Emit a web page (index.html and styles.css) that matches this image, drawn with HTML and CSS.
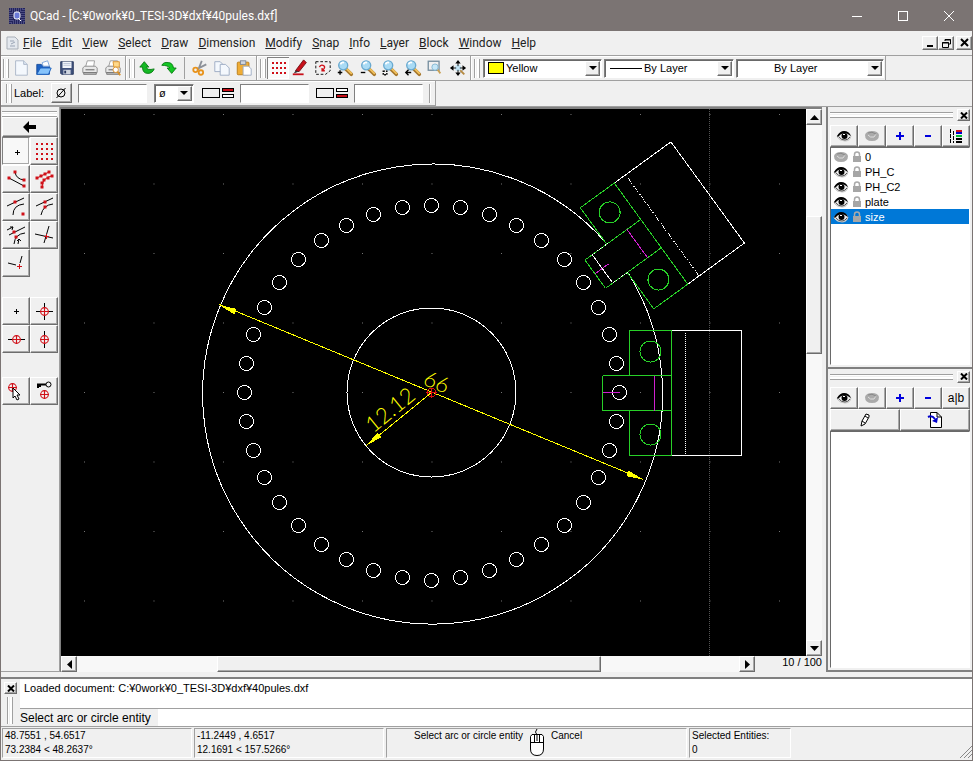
FILE: index.html
```html
<!DOCTYPE html>
<html lang="en">
<head>
    <meta charset="UTF-8">
    <meta name="viewport" content="width=device-width, initial-scale=1.0">
    <title>QCad</title>
    <link rel="stylesheet" href="styles.css">
</head>
<body>
    <!-- shared icons -->
    <svg class="defs" width="0" height="0">
        <symbol id="eye" viewBox="0 0 16 12">
            <path d="M1 7Q3 2 8 2T15 6Q14 11 9 11T1 7Z" fill="#e4e4e4" stroke="#c4c4c4"/>
            <path d="M4 6Q8 3 13 6Q11 9 8 9Q5 9 4 6Z" fill="#fff"/>
            <path d="M1 6Q4 1 8 1Q13 1 15 6Q11 3 8 3Q4 4 2 7Z" fill="#000"/>
            <circle cx="8.500" cy="6" r="3" fill="#000"/>
            <path d="M3 7Q5 10 9 10Q12 10 14 7" fill="none" stroke="#555"/>
            <rect x="7" y="4" width="2" height="1" fill="#fff"/>
        </symbol>
        <symbol id="eye-off" viewBox="0 0 16 12">
            <path d="M1 5Q2 1 8 1T15 5Q15 11 8 11T1 5Z" fill="#aaa"/>
            <path d="M4 5Q6 8 10 7L12 4" fill="none" stroke="#ddd"/>
            <path d="M4 3Q8 1 12 4" fill="none" stroke="#888"/>
        </symbol>
        <symbol id="lock" viewBox="0 0 10 12">
            <path d="M2.500 6V3.500Q2.500 1 5 1T7.500 3.500V6" fill="none" stroke="#aaa" stroke-width="1.5"/>
            <rect x="1" y="5" width="8" height="6" fill="#a6a6a6"/>
        </symbol>
        <symbol id="glass" viewBox="0 0 20 20">
            <path d="M11 11L17 17" stroke="#a5762b" stroke-width="4" stroke-linecap="round"/>
            <path d="M12 11L17 16" stroke="#f3c25c" stroke-width="2" stroke-linecap="round"/>
            <circle cx="8" cy="7" r="5" fill="#a9dbf5" stroke="#69a9cf" stroke-width="1.5"/>
            <path d="M5 6Q6 3 9 4" fill="none" stroke="#fff" stroke-width="2"/>
        </symbol>
        <symbol id="target" viewBox="0 0 10 10">
            <circle cx="5" cy="5" r="3.500" fill="none" stroke="#d01018"/>
            <path d="M5 1V9M1 5H9" stroke="#d01018"/>
        </symbol>
        <symbol id="printer" viewBox="0 0 20 20">
            <path d="M5 9L7 2H15L14 9Z" fill="#fff" stroke="#999"/>
            <path d="M2 10L4 8H16L18 10V15H2Z" fill="#e8e8e8" stroke="#888"/>
            <path d="M3 15H17V17H3Z" fill="#bbb" stroke="#777"/>
            <path d="M5 12H15" stroke="#555"/>
        </symbol>
    </svg>

    <div class="window">
        <header class="titlebar">
            <svg class="logo" width="16" height="16" viewBox="0 0 16 16">
                <rect width="16" height="16" fill="#22235c"/>
                <path d="M1 1H15V15H1ZM3 3H13V13H3Z" fill="none" stroke="#7779a8" stroke-dasharray="1 1"/>
                <rect x="5" y="4" width="6" height="7" rx="2" fill="#6b7ad8" stroke="#fff"/>
                <path d="M9 10L12 13" stroke="#fff"/>
            </svg>
            <h1>QCad - [C:¥0work¥0_TESI-3D¥dxf¥40pules.dxf]</h1>
            <button class="win-btn" aria-label="Minimize"><svg width="12" height="12"><path d="M1 6.500H11" stroke="#fff"/></svg></button>
            <button class="win-btn" aria-label="Maximize"><svg width="12" height="12"><rect x="1.500" y="1.500" width="9" height="9" fill="none" stroke="#fff"/></svg></button>
            <button class="win-btn" aria-label="Close"><svg width="12" height="12"><path d="M1 1L11 11M11 1L1 11" stroke="#fff"/></svg></button>
        </header>

        <nav class="menubar">
            <svg class="doc-icon" width="13" height="14" viewBox="0 0 13 14">
                <path d="M1 1H9L12 4V13H1Z" fill="#e4e8ee" stroke="#a9afb8"/>
                <path d="M4 5H8M5 8L9 6M4 10H9" stroke="#9aa4b5"/>
            </svg>
            <a href="#"><u>F</u>ile</a>
            <a href="#"><u>E</u>dit</a>
            <a href="#"><u>V</u>iew</a>
            <a href="#"><u>S</u>elect</a>
            <a href="#"><u>D</u>raw</a>
            <a href="#"><u>D</u>imension</a>
            <a href="#"><u>M</u>odify</a>
            <a href="#"><u>S</u>nap</a>
            <a href="#"><u>I</u>nfo</a>
            <a href="#"><u>L</u>ayer</a>
            <a href="#"><u>B</u>lock</a>
            <a href="#"><u>W</u>indow</a>
            <a href="#"><u>H</u>elp</a>
            <div class="mdi">
                <button aria-label="Minimize document"><svg width="11" height="10"><path d="M2 8H8" stroke="#000" stroke-width="2"/></svg></button>
                <button aria-label="Restore document"><svg width="11" height="10"><path d="M4 3V1.500H9.500V6H8M1.500 4.500H7.500V9.500H1.500ZM1 5H8M4 2H10" fill="none" stroke="#000"/></svg></button>
                <button aria-label="Close document"><svg width="11" height="10"><path d="M2 1L9 8M9 1L2 8" stroke="#000" stroke-width="2"/></svg></button>
            </div>
        </nav>

        <div class="toolrow">
            <div class="toolbar file-bar">
                <i class="grip"></i>
                <button class="tool" aria-label="New"><svg viewBox="0 0 20 20"><path d="M4 2H13L17 6V18H4Z" fill="#f4f8fd" stroke="#a8b4c6"/><path d="M13 2V6H17" fill="#dde6f2" stroke="#a8b4c6"/></svg></button>
                <button class="tool" aria-label="Open"><svg viewBox="0 0 20 20"><path d="M2 17V6H7L9 8H16V17Z" fill="#1d62c4" stroke="#174c98"/><path d="M8 4L14 2L16 8H9Z" fill="#fff" stroke="#79a3d8"/><path d="M2 17L6 10H18L15 17Z" fill="#86c3fb" stroke="#1b60bd"/></svg></button>
                <button class="tool" aria-label="Save"><svg viewBox="0 0 20 20"><path d="M3 3H17V17H4L3 16Z" fill="#40527d" stroke="#26355c"/><rect x="5" y="3" width="10" height="7" fill="#f2f5fa"/><path d="M6 5H14M6 7H14" stroke="#b9c4d6"/><rect x="6" y="12" width="8" height="5" fill="#cfd5df"/><rect x="7" y="13" width="2" height="3" fill="#26355c"/></svg></button>
                <button class="tool" aria-label="Print"><svg viewBox="0 0 20 20"><use href="#printer"/></svg></button>
                <button class="tool" aria-label="Print preview"><svg viewBox="0 0 20 20"><use href="#printer"/><path d="M10 3H17V9H11Z" fill="#ffd98a" stroke="#d9902a"/><circle cx="13" cy="12" r="3" fill="#fff" stroke="#d9902a"/><path d="M15 14L18 18" stroke="#d9902a" stroke-width="2"/></svg></button>
            </div>
            <div class="toolbar edit-bar">
                <i class="grip"></i>
                <button class="tool" aria-label="Undo"><svg viewBox="0 0 20 20"><path d="M2 9L7 3L12 9H9Q10 13 18 11Q16 16 11 16Q5 16 5 9Z" fill="#14b824" stroke="#087a12"/></svg></button>
                <button class="tool" aria-label="Redo"><svg viewBox="0 0 20 20"><path d="M2 7Q4 3 9 4Q14 4 15 10H18L13 16L8 10H11Q9 7 2 7Z" fill="#14c824" stroke="#087a12"/></svg></button>
                <i class="sep"></i>
                <button class="tool" aria-label="Cut"><svg viewBox="0 0 20 20"><path d="M12 2L8 12M17 6L7 11" stroke="#8c9199" stroke-width="2"/><circle cx="5" cy="12" r="2.500" fill="none" stroke="#e8931c" stroke-width="2"/><circle cx="11" cy="15" r="2.500" fill="none" stroke="#e8931c" stroke-width="2"/></svg></button>
                <button class="tool" aria-label="Copy"><svg viewBox="0 0 20 20"><path d="M2 3H8L11 6V14H2Z" fill="#f4f8fd" stroke="#9aa9c2"/><path d="M8 6H14L18 10V18H8Z" fill="#f4f8fd" stroke="#9aa9c2"/></svg></button>
                <button class="tool" aria-label="Paste"><svg viewBox="0 0 20 20"><rect x="2.500" y="3.500" width="13" height="14" rx="1" fill="#f0ad35" stroke="#b97a14"/><rect x="6" y="2" width="6" height="4" fill="#cfd5df" stroke="#7d8797"/><path d="M9 8H15L18 11V18H9Z" fill="#fff" stroke="#9aa9c2"/></svg></button>
            </div>
            <div class="toolbar view-bar">
                <i class="grip"></i>
                <button class="tool pressed" aria-label="Grid"><svg viewBox="0 0 18 18"><path d="M3 4H17M3 9H17M3 14H17" stroke="#d01018" stroke-width="2" stroke-dasharray="2 2"/></svg></button>
                <button class="tool" aria-label="Draft"><svg viewBox="0 0 20 20"><path d="M5 13L14 1L17 4L9 14Z" fill="#c8101a" stroke="#6e070c"/><path d="M5 13L9 14L3 16Z" fill="#333"/><path d="M2 17H14" stroke="#c8101a" stroke-width="2"/></svg></button>
                <button class="tool" aria-label="Redraw"><svg viewBox="0 0 20 20"><path d="M2 3H18V13L13 17H2Z" fill="none" stroke="#000" stroke-dasharray="3 2"/><path d="M6 9Q7 6 10 7Q13 8 11 11L9 13M9 10V13H12" fill="none" stroke="#d01018" stroke-width="1.500"/></svg></button>
                <button class="tool" aria-label="Zoom in"><svg viewBox="0 0 20 20"><use href="#glass"/><path d="M2 15H7M4.500 12.500V17.500" stroke="#000" stroke-width="1.500"/></svg></button>
                <button class="tool" aria-label="Zoom out"><svg viewBox="0 0 20 20"><use href="#glass"/><path d="M2 15H7" stroke="#000" stroke-width="1.500"/></svg></button>
                <button class="tool" aria-label="Auto zoom"><svg viewBox="0 0 20 20"><use href="#glass"/><rect x="2.500" y="13.500" width="4" height="4" fill="none" stroke="#000" stroke-width="1.500" stroke-dasharray="2 1"/></svg></button>
                <button class="tool" aria-label="Previous view"><svg viewBox="0 0 20 20"><use href="#glass"/><path d="M2 15H8M5 12L2 15L5 18" fill="none" stroke="#000" stroke-width="1.500"/></svg></button>
                <button class="tool" aria-label="Window zoom"><svg viewBox="0 0 20 20"><rect x="2.500" y="2.500" width="12" height="10" fill="none" stroke="#7890a0" stroke-width="1.500"/><circle cx="10" cy="9" r="3.500" fill="#c5e7f8" stroke="#83b6d0"/><path d="M13 12L16 16" stroke="#c9a053" stroke-width="2"/></svg></button>
                <button class="tool" aria-label="Zoom panning"><svg viewBox="0 0 20 20"><path d="M10 10L17 17" stroke="#b58a42" stroke-width="2"/><circle cx="10" cy="10" r="3.500" fill="#c5e7f8"/><path d="M10 3V8M10 12V17M3 10H8M12 10H17" stroke="#000"/><path d="M10 1L13 5H7ZM10 19L13 15H7ZM1 10L5 7V13ZM19 10L15 7V13Z" fill="#000"/></svg></button>
            </div>
            <div class="toolbar pen-bar">
                <i class="grip"></i>
                <div class="combo color"><i class="swatch"></i><select aria-label="Color"><option>Yellow</option></select><i class="arrow"></i></div>
                <div class="combo width"><i class="stroke"></i><select aria-label="Width"><option>By Layer</option></select><i class="arrow"></i></div>
                <div class="combo linetype"><select aria-label="Line type"><option>By Layer</option></select><i class="arrow"></i></div>
            </div>
        </div>

        <div class="toolrow options">
            <div class="toolbar option-bar">
                <i class="grip"></i>
                <label for="label">Label:</label>
                <button class="diameter" aria-label="Diameter"><svg width="14" height="14"><circle cx="7" cy="7" r="4" fill="none" stroke="#000"/><path d="M2.500 12L11.500 2" stroke="#000"/></svg></button>
                <input id="label" type="text">
                <div class="combo symbol"><select aria-label="Symbol"><option>ø</option></select><i class="arrow"></i></div>
                <label for="tol1"><svg width="34" height="12"><rect x="1.500" y="1.500" width="17" height="9" fill="none" stroke="#000"/><rect x="21.500" y="1.500" width="11" height="3" fill="#c8101a" stroke="#000"/><rect x="21.500" y="7.500" width="11" height="3" fill="#fff" stroke="#000"/></svg></label>
                <input id="tol1" type="text" aria-label="Upper tolerance">
                <label for="tol2"><svg width="34" height="12"><rect x="1.500" y="1.500" width="17" height="9" fill="none" stroke="#000"/><rect x="21.500" y="1.500" width="11" height="3" fill="#fff" stroke="#000"/><rect x="21.500" y="7.500" width="11" height="3" fill="#c8101a" stroke="#000"/></svg></label>
                <input id="tol2" type="text" aria-label="Lower tolerance">
                <i class="grip end"></i>
            </div>
        </div>

        <main class="work">
            <aside class="snap">
                <i class="grip-h"></i>
                <button class="back" aria-label="Back"><svg width="14" height="12"><path d="M0 6L6 0V4H13V8H6V12Z"/></svg></button>
                <div class="snap-grid">
                    <button class="pressed" aria-label="Free"><svg><path d="M11 13.500H16M13.500 11V16"/></svg></button>
                    <button aria-label="Grid snap"><svg><path class="r" d="M4 5H22M4 10H22M4 15H22M4 20H22" stroke-width="2" stroke-dasharray="2 3"/></svg></button>
                    <button aria-label="Endpoints"><svg><path d="M5 11L20 19M11 5Q12 12 20 13"/><path class="dot" d="M11 5h0M5 11h0M20 13h0M20 19h0"/></svg></button>
                    <button aria-label="On entity"><svg><path class="r" d="M5 11L17 5M20 9Q11 10 10 20"/><path class="dot" d="M5 11h0M9 9h0M13 7h0M17 5h0M20 9h0M16 11h0M12 13h0M10 16h0M10 20h0"/></svg></button>
                    <button aria-label="Center"><svg><path d="M3 11L20 3M9 20Q9 10 20 9"/><path class="dot" d="M11 7h0M19 19h0"/></svg></button>
                    <button aria-label="Middle"><svg><path d="M4 11L21 3M9 20Q11 10 21 9"/><path class="dot" d="M13 7h0M13 12h0"/></svg></button>
                    <button aria-label="Distance from endpoint"><svg><path d="M3 7L9 4M6 4H9L8 7M5 12L21 4M10 21Q11 11 21 10M14 21L15 16M13 18L15 16L17 18"/><path class="dot" d="M10 9h0M12 14h0"/></svg></button>
                    <button aria-label="Intersection"><svg><path d="M3 11L21 15M17 3L12 20"/><path class="r" d="M12 13.500H17M14.500 11V16"/></svg></button>
                    <button aria-label="Intersection manually"><svg><path d="M4 12L12 14M18 5L16 12"/><path class="r" d="M13 15.500H18M15.500 13V18"/></svg></button>
                </div>
                <div class="snap-grid">
                    <button aria-label="Restrict nothing"><svg><path d="M10 12.500H15M12.500 10V15"/></svg></button>
                    <button aria-label="Restrict orthogonal"><svg><path d="M4 12.500H21M12.500 4V21"/><use href="#target" x="7" y="7" width="11" height="11"/></svg></button>
                    <button aria-label="Restrict horizontal"><svg><path d="M4 12.500H21"/><use href="#target" x="7" y="7" width="11" height="11"/></svg></button>
                    <button aria-label="Restrict vertical"><svg><path d="M12.500 4V21"/><use href="#target" x="7" y="7" width="11" height="11"/></svg></button>
                </div>
                <div class="snap-grid">
                    <button aria-label="Set relative zero"><svg><use href="#target" x="3" y="3" width="11" height="11"/><path d="M9 9V19L11 17L13 21L15 20L13 16H16Z" fill="#fff"/></svg></button>
                    <button aria-label="Lock relative zero"><svg><path d="M5 5.500H14M6 5V9M8 5V8" stroke-width="2"/><circle cx="16.500" cy="5.500" r="2.500" fill="none" stroke="#000"/><use href="#target" x="7" y="10" width="11" height="11"/></svg></button>
                </div>
            </aside>

            <section class="view">
                <svg class="drawing">
                    <defs>
                        <pattern id="dots" x="22" y="4" width="69.500" height="69.500" patternUnits="userSpaceOnUse">
                            <rect x="1" y="1" width="1" height="1" fill="#777"/>
                        </pattern>
                        <g id="holder">
                            <path class="white" d="M240 -62H310V63H240"/>
                            <path class="white dotted" d="M254 -60V63"/>
                            <path class="green" d="M198 -17V-62H240V63H198V18M171 -17H240M171 18H240M171 -17V18"/>
                            <circle class="green" cx="219" cy="-41" r="10.500"/>
                            <circle class="green" cx="219" cy="42" r="10.500"/>
                            <path class="magenta" d="M223 -17V18M171 0H188"/>
                        </g>
                    </defs>
                    <rect width="100%" height="100%" fill="#000"/>
                    <rect width="100%" height="100%" fill="url(#dots)"/>
                    <g transform="translate(370.500 283.500)">
                        <path class="meta" d="M278 -284V1000"/>
                        <path class="white" d="M197 -119A230 230 0 1 1 175 -149"/>
                        <circle class="white" r="84.500"/>
                        <g id="holes"></g>
                        <use href="#holder"/>
                        <g transform="rotate(-36)">
                            <use href="#holder" x="31"/>
                            <path class="white" d="M211 -17V17"/>
                            <path class="white dotted" d="M211 -17H230M211 18H230"/>
                        </g>
                        <path class="yellow" d="M-212 -88L212 87M0 0L-65 53"/>
                        <path class="head" transform="rotate(22.400)" d="M-229 0L-212 -3V3ZM229 0L212 -3V3Z"/>
                        <path class="head" transform="rotate(140.800)" d="M84 0L67 -3V3Z"/>
                        <text transform="rotate(22.400)" x="-12" y="-4">66</text>
                        <text transform="rotate(-39.200)" x="-71" y="-5">12.12</text>
                        <circle class="zero" r="4.500"/>
                        <path class="zero" d="M-5 0H5M0 -5V5"/>
                    </g>
                </svg>
                <div class="scroll vertical">
                    <button aria-label="Scroll up"><svg width="9" height="5"><path d="M0 5L4.500 0L9 5Z"/></svg></button>
                    <i class="before"></i><i class="thumb"></i><i class="after"></i>
                    <button aria-label="Scroll down"><svg width="9" height="5"><path d="M0 0L4.500 5L9 0Z"/></svg></button>
                </div>
                <div class="bottom">
                    <div class="scroll horizontal">
                        <button aria-label="Scroll left"><svg width="5" height="9"><path d="M5 0L0 4.500L5 9Z"/></svg></button>
                        <i class="before"></i><i class="thumb"></i><i class="after"></i>
                        <button aria-label="Scroll right"><svg width="5" height="9"><path d="M0 0L5 4.500L0 9Z"/></svg></button>
                    </div>
                    <span class="grid-status">10 / 100</span>
                </div>
            </section>

            <aside class="docks">
                <section class="dock layers">
                    <div class="dock-head"><i class="grip-h"></i><button class="x" aria-label="Close layers"><svg width="8" height="7"><path d="M1 0.500L7 6.500M7 0.500L1 6.500" stroke="#000" stroke-width="2"/></svg></button></div>
                    <div class="dock-btns">
                        <button aria-label="Show all layers"><svg width="16" height="12"><use href="#eye"/></svg></button>
                        <button aria-label="Hide all layers"><svg width="16" height="12"><use href="#eye-off"/></svg></button>
                        <button class="sign" aria-label="Add layer"><svg width="8" height="8"><path d="M0 4H8M4 0V8"/></svg></button>
                        <button class="sign" aria-label="Remove layer"><svg width="8" height="8"><path d="M1 4H7"/></svg></button>
                        <button aria-label="Edit layer"><svg width="14" height="16"><path d="M1.500 1V15M4.500 3V15" stroke="#000" stroke-dasharray="4 1"/><path d="M7 3H13" stroke="#d01018" stroke-width="2"/><path d="M7 5H13" stroke="#00c" stroke-width="2"/><path d="M7 8H13" stroke="#0b3" stroke-width="2"/><path d="M7 11H13M7 14H13" stroke="#000" stroke-width="2"/></svg></button>
                    </div>
                    <ul class="list">
                        <li><svg width="16" height="12"><use href="#eye-off"/></svg><svg width="10" height="12"><use href="#lock"/></svg>0</li>
                        <li><svg width="16" height="12"><use href="#eye"/></svg><svg width="10" height="12"><use href="#lock"/></svg>PH_C</li>
                        <li><svg width="16" height="12"><use href="#eye"/></svg><svg width="10" height="12"><use href="#lock"/></svg>PH_C2</li>
                        <li><svg width="16" height="12"><use href="#eye"/></svg><svg width="10" height="12"><use href="#lock"/></svg>plate</li>
                        <li class="active"><svg width="16" height="12"><use href="#eye"/></svg><svg width="10" height="12"><use href="#lock"/></svg>size</li>
                    </ul>
                </section>
                <section class="dock blocks">
                    <div class="dock-head"><i class="grip-h"></i><button class="x" aria-label="Close blocks"><svg width="8" height="7"><path d="M1 0.500L7 6.500M7 0.500L1 6.500" stroke="#000" stroke-width="2"/></svg></button></div>
                    <div class="dock-btns">
                        <button aria-label="Show all blocks"><svg width="16" height="12"><use href="#eye"/></svg></button>
                        <button aria-label="Hide all blocks"><svg width="16" height="12"><use href="#eye-off"/></svg></button>
                        <button class="sign" aria-label="Add block"><svg width="8" height="8"><path d="M0 4H8M4 0V8"/></svg></button>
                        <button class="sign" aria-label="Remove block"><svg width="8" height="8"><path d="M1 4H7"/></svg></button>
                        <button>a|b</button>
                    </div>
                    <div class="dock-btns">
                        <button aria-label="Edit block"><svg width="12" height="16"><path d="M2 14L3 9L7 2L10 3L10 5L6 12L2 14ZM3 9L6 11M6 4L9 6" fill="#fff" stroke="#000"/></svg></button>
                        <button aria-label="Insert block"><svg width="16" height="16"><path d="M3.500 0.500H10L14.500 5V15.500H3.500ZM10 0.500V5H14.500" fill="#fff" stroke="#000"/><path d="M1 5Q5 3 8 7" fill="none" stroke="#00c" stroke-width="2"/><path d="M5 9L11 5L10 11Z" fill="#00c"/></svg></button>
                    </div>
                    <ul class="list"></ul>
                </section>
            </aside>
        </main>

        <section class="command">
            <div class="command-side">
                <button class="x" aria-label="Close command line"><svg width="8" height="7"><path d="M1 0.500L7 6.500M7 0.500L1 6.500" stroke="#000" stroke-width="2"/></svg></button>
                <i class="grip"></i>
            </div>
            <div class="command-main">
                <output class="log">Loaded document: C:¥0work¥0_TESI-3D¥dxf¥40pules.dxf</output>
                <div class="prompt"><label for="cmd">Select arc or circle entity</label><input id="cmd" type="text"></div>
            </div>
        </section>

        <footer class="status">
            <div class="cell coords">48.7551 , 54.6517<br>73.2384 &lt; 48.2637°</div>
            <div class="cell coords">-11.2449 , 4.6517<br>12.1691 &lt; 157.5266°</div>
            <div class="cell mouse">
                <span class="left-hint">Select arc or circle entity</span>
                <svg width="16" height="28"><path d="M8 6Q5 3 8 0M8 6V12M1.500 7.500L3 5.500H13L14.500 7.500V20Q14.500 26.500 8 26.500T1.500 20ZM1.500 13.500H14.500M5.500 6V13M10.500 6V13" fill="#fff" stroke="#000"/></svg>
                <span>Cancel</span>
            </div>
            <div class="cell selected">Selected Entities:<br>0</div>
            <svg class="sizegrip" width="12" height="12"><path d="M0 12L12 0M4 12L12 4M8 12L12 8" stroke="#888"/></svg>
        </footer>
    </div>

    <script>
        // 40 holes on the pitch circle
        var holes = document.getElementById('holes');
        var count = 40, pitch = 187.5;
        for (var i = 0; i < count; i++) {
            var a = i * 2 * Math.PI / count;
            var c = document.createElementNS('http://www.w3.org/2000/svg', 'circle');
            c.setAttribute('class', 'white');
            c.setAttribute('cx', Math.round(pitch * Math.cos(a)));
            c.setAttribute('cy', Math.round(pitch * Math.sin(a)));
            c.setAttribute('r', 7);
            holes.appendChild(c);
        }
    </script>
</body>
</html>
```

FILE: styles.css
```css
* {
    box-sizing: border-box;
    margin: 0;
    padding: 0;
}

body {
    font: 11px/14px "Liberation Sans", Arial, sans-serif;
    color: #000;
    background: #f0f0f0;
}
button, input, select {
    font: inherit;
    color: inherit;
    border-radius: 0;
}
svg {
    display: block;
    flex: none;
}
ul {
    list-style: none;
}
i {
    display: block;
}
.defs {
    position: absolute;
}

.window {
    display: flex;
    flex-direction: column;
    height: 100vh;
    border: 1px solid #7b7473;
    border-top: 0;
    overflow: hidden;
}

/* title and menu */
.titlebar {
    display: flex;
    align-items: center;
    height: 31px;
    padding-left: 8px;
    background: #7b7473;
    color: #fff;
}
.titlebar h1 {
    flex: 1;
    margin-left: 5px;
    font: 12px/16px Roboto, "Noto Sans", sans-serif;
}
.win-btn {
    display: flex;
    align-items: center;
    justify-content: center;
    width: 46px;
    height: 31px;
    border: 0;
    background: none;
}
.menubar {
    display: flex;
    align-items: center;
    gap: 10px;
    height: 24px;
    padding-left: 5px;
    font: 12px/16px Roboto, "Noto Sans", sans-serif;
}
.doc-icon {
    margin-right: -6px;
}
.menubar a {
    color: #222;
    text-decoration: none;
}
.mdi {
    display: flex;
    margin-left: auto;
}
.mdi button {
    width: 16px;
    height: 14px;
}
.mdi button:last-child {
    margin-left: 2px;
}

/* raised buttons */
.mdi button, .x, .snap button, .dock-btns button, .diameter, .scroll button, .arrow {
    display: flex;
    align-items: center;
    justify-content: center;
    border: 1px solid;
    border-color: #fff #6d6d6d #6d6d6d #fff;
    box-shadow: inset -1px -1px #a8a8a8;
    background: #f0f0f0;
}
.x {
    width: 13px;
    height: 12px;
}

/* toolbars */
.toolrow {
    display: flex;
    height: 25px;
    border-top: 1px solid #a0a0a0;
}
.options {
    height: 26px;
}
.toolbar {
    display: flex;
    align-items: center;
    height: 25px;
    padding-right: 1px;
    border-right: 1px solid #a0a0a0;
    border-bottom: 1px solid #a0a0a0;
    box-shadow: inset 1px 1px #fff;
}
.grip {
    width: 6px;
    height: 19px;
    margin: 0 1px 0 3px;
    border: solid #a0a0a0;
    border-width: 0 1px;
    box-shadow: inset 1px 0 #fff, inset -2px 0 #fff;
}
.tool {
    display: flex;
    align-items: center;
    justify-content: center;
    width: 22px;
    height: 22px;
    border: 0;
    background: none;
}
.tool svg {
    width: 18px;
    height: 18px;
}
.file-bar .tool {
    width: 23px;
}
.file-bar .grip {
    margin: 0 0 0 2px;
}
.view-bar .tool:nth-of-type(2n) {
    margin-right: 1px;
}
.sep {
    width: 1px;
    height: 22px;
    margin: 0 4px;
    background: #a0a0a0;
}
.pressed {
    background: #fafafa;
    box-shadow: inset 1px 1px #808080, inset -1px -1px #fff;
}
.combo {
    position: relative;
    height: 19px;
    border: 1px solid;
    border-color: #808080 #fff #fff #808080;
    box-shadow: inset 1px 1px #696969;
    background: #fff;
}
.pen-bar {
    gap: 2px;
}
.combo select {
    width: 100%;
    height: 17px;
    appearance: none;
    border: 0;
    background: none;
}
.combo .arrow {
    position: absolute;
    top: 1px;
    right: 1px;
    width: 15px;
    height: 15px;
    pointer-events: none;
}
.arrow::before {
    content: "";
    border: 4px solid transparent;
    border-top-color: #000;
    border-bottom: 0;
}
.color {
    width: 119px;
}
.color select {
    padding-left: 22px;
}
.width {
    width: 130px;
}
.width select {
    padding-left: 39px;
}
.linetype {
    width: 148px;
}
.linetype select {
    padding-left: 37px;
}
.swatch, .stroke {
    position: absolute;
    pointer-events: none;
}
.swatch {
    top: 2px;
    left: 4px;
    width: 16px;
    height: 12px;
    border: 1px solid #000;
    background: #ff0;
}
.stroke {
    top: 8px;
    left: 5px;
    width: 32px;
    height: 1px;
    background: #000;
}
.option-bar {
    padding-left: 2px;
}
.option-bar .grip {
    margin-right: 2px;
}
.option-bar input {
    width: 69px;
    height: 19px;
    border: 1px solid;
    border-color: #808080 #fff #fff #808080;
    background: #fff;
}
.diameter {
    width: 21px;
    height: 20px;
    margin: 0 6px 0 7px;
}
.symbol {
    width: 40px;
    margin: 0 7px;
}
.symbol select {
    padding-left: 4px;
}
.option-bar label svg {
    margin-right: 5px;
}
.option-bar input + label {
    margin-left: 6px;
}
.option-bar .end {
    width: 2px;
    margin: 0 3px 0 6px;
    border-right: 0;
}

/* work area */
.work {
    display: flex;
    flex: 1;
    min-height: 0;
    padding-bottom: 5px;
    border-top: 1px solid #a0a0a0;
}
.snap {
    width: 59px;
    padding: 4px 2px 0 1px;
    border-right: 1px solid #a0a0a0;
    border-bottom: 1px solid #a0a0a0;
}
.grip-h {
    height: 6px;
    border: solid #a0a0a0;
    border-width: 1px 0;
    box-shadow: inset 0 1px #fff, inset 0 -2px #fff;
}
.snap .back {
    width: 56px;
    height: 20px;
}
.snap-grid {
    display: grid;
    grid-template-columns: 28px 28px;
    grid-auto-rows: 28px;
    margin-bottom: 20px;
}
.snap-grid + .snap-grid + .snap-grid {
    margin-top: 24px;
}
.snap-grid svg {
    width: 24px;
    height: 24px;
    fill: none;
    stroke: #000;
}
.snap-grid .r {
    stroke: #d01018;
}
.snap-grid .dot {
    stroke: #d01018;
    stroke-width: 3;
    stroke-linecap: square;
}
.snap .pressed {
    border-color: #808080 #fff #fff #808080;
    background: #f8f8f8;
}
.view {
    display: grid;
    flex: 1;
    min-width: 0;
    grid-template: 1fr 16px / 1fr 16px;
    border: 1px solid #808080;
    border-width: 2px 0 0 1px;
}
.drawing {
    width: 100%;
    height: 100%;
    min-height: 0;
    background: #000;
    shape-rendering: crispEdges;
}
.drawing path, .drawing circle {
    fill: none;
}
.white {
    stroke: #fff;
}
.green {
    stroke: #28d028;
}
.magenta {
    stroke: #d020d0;
}
.yellow {
    stroke: #ff0;
}
.dotted {
    stroke-dasharray: 1 1;
}
.meta {
    stroke: #555;
    stroke-dasharray: 1 1;
}
.zero {
    stroke: #e01010;
}
.drawing .head {
    fill: #ff0;
}
.drawing text {
    font: 300 22px Lato, "Open Sans", sans-serif;
    fill: #ff0;
}
.scroll {
    display: flex;
    background: #f8f8f8;
}
.scroll button {
    width: 16px;
    height: 16px;
}
.vertical {
    flex-direction: column;
}
.thumb {
    border: 1px solid;
    border-color: #fff #6d6d6d #6d6d6d #fff;
    box-shadow: inset -1px -1px #a8a8a8;
    background: #f0f0f0;
}
.vertical .before {
    flex: 91;
}
.vertical .thumb {
    flex: 136;
}
.vertical .after {
    flex: 287;
}
.horizontal {
    flex: 1;
}
.horizontal .before {
    flex: 140;
}
.horizontal .thumb {
    flex: 384;
}
.horizontal .after {
    flex: 138;
}
.bottom {
    display: flex;
    grid-column: span 2;
}
.grid-status {
    width: 67px;
    line-height: 12px;
    text-align: right;
}

/* docks on the right */
.docks {
    display: flex;
    flex-direction: column;
    width: 150px;
    padding-left: 4px;
}
.dock {
    display: flex;
    flex-direction: column;
    padding: 2px;
    border: solid #808080;
    border-width: 0 0 2px 2px;
}
.layers {
    flex: 261;
}
.blocks {
    flex: 303;
}
.dock-head {
    display: flex;
    align-items: center;
    height: 16px;
    padding-bottom: 4px;
}
.dock-head .grip-h {
    flex: 1;
    margin-right: 4px;
}
.dock-btns {
    display: flex;
}
.dock-btns button {
    flex: 1;
    height: 22px;
    font-size: 12px;
}
.sign path {
    stroke: #00d;
    stroke-width: 2;
}
.list {
    flex: 1;
    padding-top: 1px;
    border: 1px solid;
    border-color: #696969 #fff #fff #696969;
    background: #fff;
}
.list li {
    display: flex;
    align-items: center;
    height: 15px;
    padding-left: 2px;
}
.list li svg {
    margin-right: 3px;
}
.list .active {
    background: #0078d7;
    color: #fff;
}

/* command line */
.command {
    display: flex;
    height: 50px;
    border-top: 2px solid #808080;
    border-bottom: 1px solid #a0a0a0;
}
.command-side {
    display: flex;
    flex-direction: column;
    width: 19px;
    padding: 3px 0 2px 3px;
}
.command-side .grip {
    flex: 1;
    margin: 3px 3px 0;
}
.command-main {
    display: flex;
    flex: 1;
    flex-direction: column;
}
.log {
    flex: 1;
    padding: 2px 4px;
    border-bottom: 1px solid #a0a0a0;
    background: #fff;
}
.prompt {
    display: flex;
    height: 17px;
    font-size: 12px;
    line-height: 18px;
}
.prompt label {
    padding-right: 7px;
}
.prompt input {
    flex: 1;
    border: 0;
    background: #fff;
}

/* status bar */
.status {
    display: flex;
    gap: 2px;
    height: 33px;
    padding: 1px 0 2px 1px;
    font-size: 10px;
}
.cell {
    padding: 0 2px;
    border: 1px solid;
    border-color: #a0a0a0 #fff #fff #a0a0a0;
}
.coords {
    width: 190px;
}
.mouse {
    display: flex;
    width: 301px;
}
.mouse svg {
    margin: 0 6px;
}
.left-hint {
    width: 134px;
    text-align: right;
}
.selected {
    width: 102px;
}
.sizegrip {
    align-self: flex-end;
    margin-left: auto;
}
```
